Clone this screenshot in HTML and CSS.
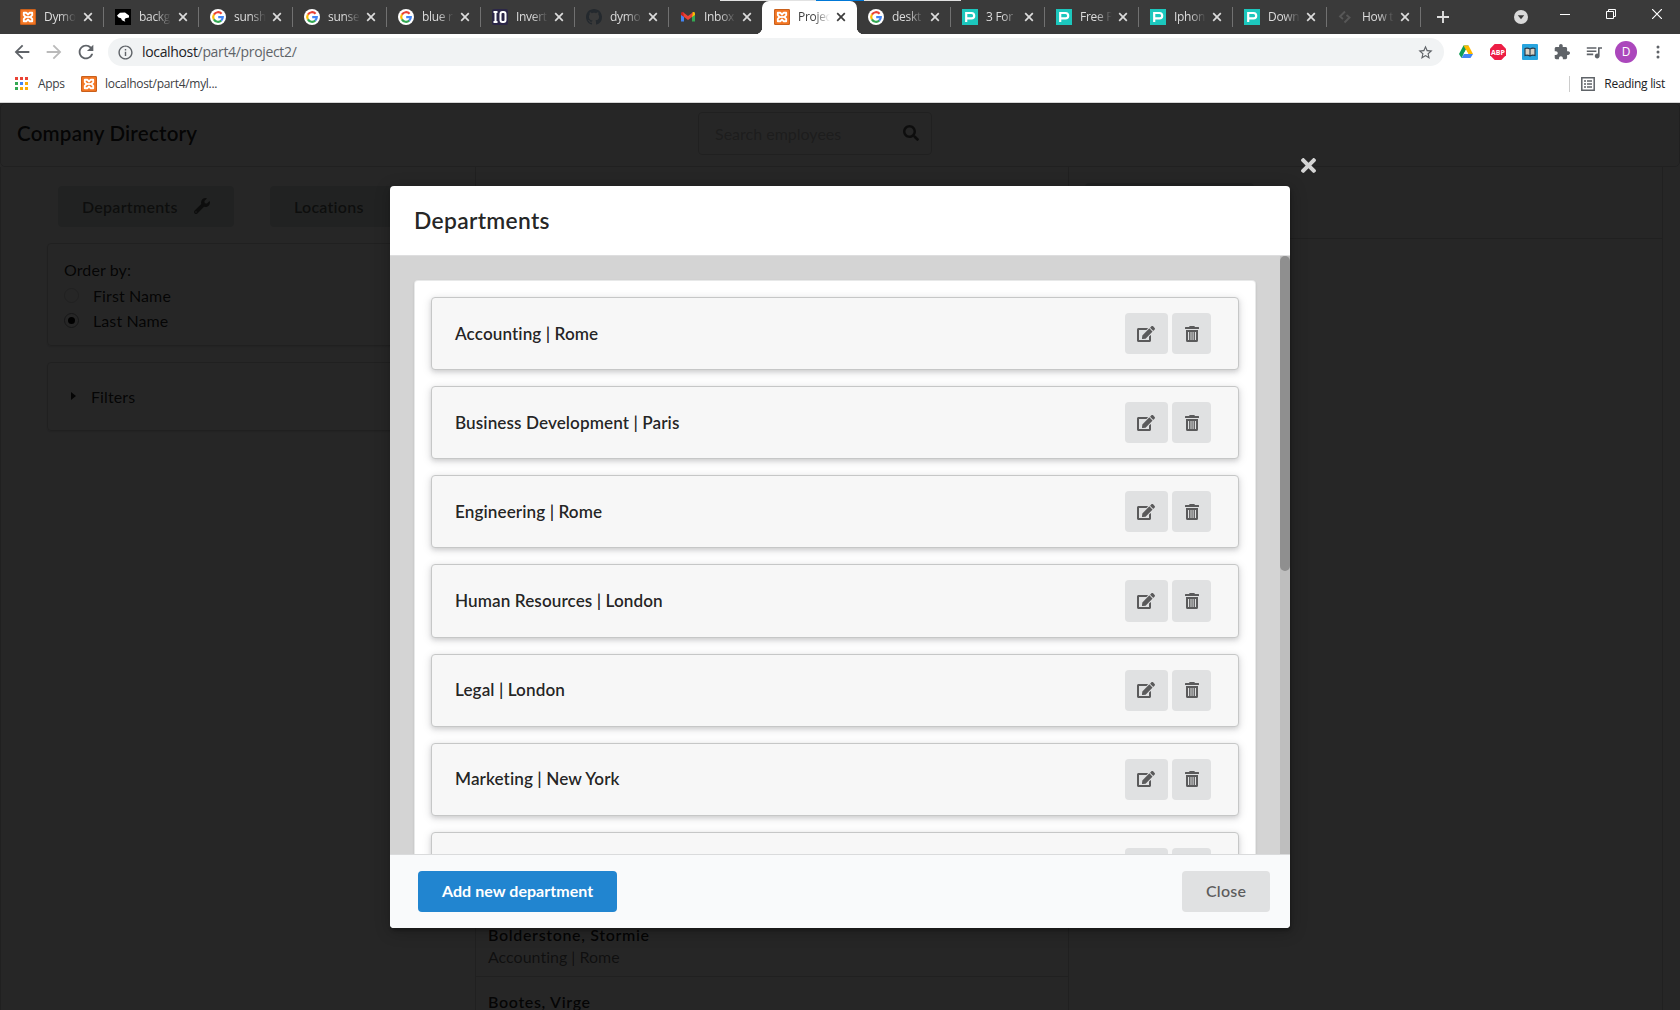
FILE: index.html
```html
<!DOCTYPE html>
<html lang="en">
<head>
<meta charset="utf-8">
<title>Project 2</title>
<link rel="stylesheet" href="styles.css">
</head>
<body>
<svg class="defs" aria-hidden="true">
  <symbol id="xampp" viewBox="0 0 16 16"><rect width="16" height="16" rx="1.2" fill="#c9601c"/><rect x="1" y="1" width="14" height="14" rx="1" fill="#f37623"/><path d="M3.800 3.700h2.400L8 5.500l1.800-1.800h2.400v2.500L10.400 8l1.800 1.800v2.500H9.800L8 10.500l-1.800 1.800H3.800V9.800L5.600 8 3.800 6.200z" fill="none" stroke="#fff" stroke-width="1.900" stroke-linejoin="round"/><path d="M6 8h4" stroke="#fff" stroke-width="1.800"/></symbol>
  <symbol id="bird" viewBox="0 0 16 16"><rect width="16" height="16" fill="#000"/><path d="M2 6.500 5 3.800 10 3.400l4 3v2l-3.500.8-1 1.500.8 2-3.300-1.500L6 9.200 3.500 8.500z" fill="#fff"/></symbol>
  <symbol id="google" viewBox="0 0 16 16"><circle cx="8" cy="8" r="8" fill="#fff"/><g fill="none" stroke-width="2.200"><path d="M11.600 4.800A4.800 4.800 0 0 0 3.900 5.600" stroke="#ea4335"/><path d="M3.900 5.500a4.900 4.900 0 0 0 0 5" stroke="#fbbc05"/><path d="M3.900 10.400a4.800 4.800 0 0 0 7.400 1.100" stroke="#34a853"/><path d="M8.200 8.100h4.600a4.800 4.800 0 0 1-1.600 3.500" stroke="#4285f4"/></g></symbol>
  <symbol id="io" viewBox="0 0 16 16"><rect width="16" height="16" rx="2" fill="#2b2647"/><path d="M1.500 3h4M1.500 13h4M3.500 3v10" stroke="#fff" stroke-width="2"/><rect x="8.500" y="3" width="5" height="10" rx="2" fill="none" stroke="#fff" stroke-width="2"/></symbol>
  <symbol id="github" viewBox="0 0 16 16"><path fill="#24292e" d="M8 0C3.580 0 0 3.580 0 8c0 3.540 2.290 6.530 5.470 7.590.4.070.55-.17.55-.38 0-.19-.01-.82-.01-1.490-2.010.37-2.530-.49-2.690-.94-.09-.23-.48-.94-.82-1.130-.28-.15-.68-.52-.01-.53.63-.01 1.080.58 1.230.82.72 1.210 1.870.87 2.330.66.07-.52.28-.87.51-1.070-1.780-.2-3.640-.89-3.640-3.950 0-.87.31-1.590.82-2.150-.08-.2-.36-1.020.08-2.120 0 0 .67-.21 2.200.82.64-.18 1.320-.27 2-.27s1.360.09 2 .27c1.530-1.040 2.200-.82 2.200-.82.44 1.100.16 1.920.08 2.120.51.56.82 1.270.82 2.150 0 3.070-1.870 3.750-3.650 3.950.29.25.54.73.54 1.480 0 1.070-.01 1.930-.01 2.200 0 .21.15.46.55.38A8.010 8.010 0 0 0 16 8c0-4.420-3.580-8-8-8z"/></symbol>
  <symbol id="gmail" viewBox="0 0 16 16"><path d="M1 5v7.500h3V7z" fill="#4285f4"/><path d="M15 5v7.500h-3V7z" fill="#34a853"/><path d="M1 6V4.300Q1 2.800 3 3l1 1v4z" fill="#c5221f"/><path d="M15 6V4.300Q15 2.800 13 3l-1 1v4z" fill="#fbbc04"/><path d="M3 3.200 8 7l5-3.800L12 8l-4 3-4-3z" fill="#ea4335"/></symbol>
  <symbol id="pex" viewBox="0 0 16 16"><rect width="16" height="16" fill="#1cc7bd"/><path d="M4.200 13V4h5.300a2.600 2.600 0 0 1 0 5.400H5" fill="none" stroke="#fff" stroke-width="2.200"/></symbol>
  <symbol id="snippet" viewBox="0 0 16 16"><path d="M7 2.500 2 7.500l3 2.500M6.500 13.500l5-5-3-2.500" fill="none" stroke="#575757" stroke-width="1.900"/></symbol>
  <symbol id="x" viewBox="0 0 10 10"><path d="M1.200 1.200l7.600 7.600M8.800 1.200l-7.600 7.600" stroke="currentColor" stroke-width="1.700"/></symbol>
  <symbol id="wrench" viewBox="0 0 512 512"><path fill="currentColor" d="M507.730 109.100c-2.240-9.030-13.540-12.090-20.120-5.510l-74.360 74.360-67.880-11.310-11.310-67.880 74.360-74.360c6.620-6.620 3.430-17.900-5.660-20.160-47.380-11.740-99.550.91-136.580 37.930-39.640 39.640-50.550 97.100-34.050 147.200L18.740 402.760c-24.990 24.990-24.990 65.510 0 90.500 24.990 24.990 65.510 24.990 90.500 0l213.210-213.210c50.120 16.710 107.470 5.680 147.370-34.220 37.070-37.070 49.700-89.320 37.910-136.730zM64 472c-13.250 0-24-10.750-24-24 0-13.260 10.750-24 24-24s24 10.740 24 24c0 13.250-10.750 24-24 24z"/></symbol>
  <symbol id="search" viewBox="0 0 512 512"><path fill="currentColor" d="M505 442.700L405.300 343c-4.500-4.500-10.600-7-17-7H372c27.600-35.300 44-79.700 44-128C416 93.100 322.900 0 208 0S0 93.100 0 208s93.100 208 208 208c48.300 0 92.700-16.400 128-44v16.300c0 6.400 2.500 12.500 7 17l99.700 99.700c9.400 9.400 24.600 9.400 33.900 0l28.300-28.300c9.400-9.400 9.400-24.600.1-34zM208 336c-70.700 0-128-57.200-128-128 0-70.700 57.200-128 128-128 70.700 0 128 57.200 128 128 0 70.700-57.200 128-128 128z"/></symbol>
  <symbol id="edit" viewBox="0 0 576 512"><path fill="currentColor" d="M402.600 83.200l90.200 90.200c3.800 3.800 3.800 10 0 13.800L274.400 405.600l-92.800 10.300c-12.400 1.400-22.900-9.100-21.500-21.500l10.300-92.800L388.800 83.200c3.800-3.800 10-3.800 13.800 0zm162-22.900l-48.800-48.800c-15.200-15.200-39.900-15.200-55.200 0l-35.400 35.400c-3.800 3.800-3.800 10 0 13.800l90.200 90.200c3.800 3.800 10 3.800 13.800 0l35.400-35.400c15.200-15.300 15.200-40 0-55.200zM384 346.200V448H64V128h229.800c3.200 0 6.200-1.300 8.500-3.500l40-40c7.600-7.600 2.200-20.500-8.500-20.500H48C21.500 64 0 85.500 0 112v352c0 26.500 21.500 48 48 48h352c26.500 0 48-21.500 48-48V306.200c0-10.700-12.900-16-20.500-8.500l-40 40c-2.200 2.300-3.500 5.300-3.500 8.500z"/></symbol>
  <symbol id="trash" viewBox="0 0 14 16"><path fill="currentColor" d="M0 1.500q0-.5.500-.5H4l.7-1h4.600l.7 1h3.500q.5 0 .5.500V3H0z"/><path fill="currentColor" fill-rule="evenodd" d="M1 4h12v10.500q0 1.500-1.500 1.500h-9Q1 16 1 14.500zM3 6v8h1.100V6zM5.500 6v8h1V6zM7.600 6v8h1V6zM9.900 6v8H11V6z"/></symbol>
  <symbol id="times" viewBox="0 80 352 352"><path fill="currentColor" d="M242.720 256l100.070-100.070c12.280-12.280 12.280-32.190 0-44.480l-22.240-22.240c-12.280-12.280-32.190-12.280-44.480 0L176 189.280 75.930 89.210c-12.280-12.280-32.190-12.280-44.480 0L9.210 111.450c-12.280 12.280-12.280 32.190 0 44.480L109.280 256 9.210 356.070c-12.280 12.280-12.280 32.190 0 44.480l22.240 22.240c12.280 12.280 32.200 12.280 44.480 0L176 322.720l100.070 100.070c12.280 12.280 32.200 12.280 44.480 0l22.240-22.240c12.280-12.280 12.280-32.190 0-44.480L242.720 256z"/></symbol>
  <symbol id="arrow" viewBox="0 0 24 24"><path fill="currentColor" d="M20 11H7.830l5.590-5.590L12 4l-8 8 8 8 1.410-1.410L7.830 13H20v-2z"/></symbol>
</svg>

<header class="browser">
  <div class="tabstrip">
    <div class="edge"><i></i></div>
    <div class="tab first"><svg class="fav"><use href="#xampp"/></svg><span>Dymo</span><svg class="x"><use href="#x"/></svg></div>
    <div class="tab second"><svg class="fav"><use href="#bird"/></svg><span>backg</span><svg class="x"><use href="#x"/></svg></div>
    <div class="tab"><svg class="fav"><use href="#google"/></svg><span>sunsh</span><svg class="x"><use href="#x"/></svg></div>
    <div class="tab"><svg class="fav"><use href="#google"/></svg><span>sunse</span><svg class="x"><use href="#x"/></svg></div>
    <div class="tab"><svg class="fav"><use href="#google"/></svg><span>blue r</span><svg class="x"><use href="#x"/></svg></div>
    <div class="tab"><svg class="fav"><use href="#io"/></svg><span>Invert</span><svg class="x"><use href="#x"/></svg></div>
    <div class="tab"><svg class="fav"><use href="#github"/></svg><span>dymo</span><svg class="x"><use href="#x"/></svg></div>
    <div class="tab before"><svg class="fav"><use href="#gmail"/></svg><span>Inbox</span><svg class="x"><use href="#x"/></svg></div>
    <div class="tab active"><svg class="fav"><use href="#xampp"/></svg><span>Projec</span><svg class="x"><use href="#x"/></svg></div>
    <div class="tab"><svg class="fav"><use href="#google"/></svg><span>deskt</span><svg class="x"><use href="#x"/></svg></div>
    <div class="tab"><svg class="fav"><use href="#pex"/></svg><span>3 For</span><svg class="x"><use href="#x"/></svg></div>
    <div class="tab"><svg class="fav"><use href="#pex"/></svg><span>Free P</span><svg class="x"><use href="#x"/></svg></div>
    <div class="tab"><svg class="fav"><use href="#pex"/></svg><span>Iphon</span><svg class="x"><use href="#x"/></svg></div>
    <div class="tab"><svg class="fav"><use href="#pex"/></svg><span>Down</span><svg class="x"><use href="#x"/></svg></div>
    <div class="tab"><svg class="fav"><use href="#snippet"/></svg><span>How t</span><svg class="x"><use href="#x"/></svg></div>
    <svg class="newtab" viewBox="0 0 12 12"><path d="M6 0v12M0 6h12" stroke="#dedede" stroke-width="1.900"/></svg>
    <div class="window">
      <svg class="drop" viewBox="0 0 14 14"><circle cx="7" cy="7" r="7" fill="#d9d9d9"/><path d="M3.800 5.300h6.400L7 9.300z" fill="#3a3a3a"/></svg>
      <svg class="min" viewBox="0 0 10 10"><path d="M0 5.500h10" stroke="#fff"/></svg>
      <svg class="max" viewBox="0 0 10 10"><path d="M.5 2.500h7v7h-7zM2.500 2.500v-2h7v7h-2" fill="none" stroke="#fff"/></svg>
      <svg class="shut" viewBox="0 0 10 10"><path d="M0 0l10 10M10 0L0 10" stroke="#fff" stroke-width="1.200"/></svg>
    </div>
  </div>
  <div class="toolbar">
    <svg class="nav"><use href="#arrow"/></svg>
    <svg class="nav forward"><use href="#arrow"/></svg>
    <svg class="nav" viewBox="0 0 24 24"><path fill="currentColor" d="M17.650 6.350C16.200 4.900 14.210 4 12 4c-4.420 0-7.990 3.580-7.990 8s3.570 8 7.990 8c3.730 0 6.840-2.550 7.730-6h-2.080c-.82 2.330-3.040 4-5.650 4-3.310 0-6-2.690-6-6s2.690-6 6-6c1.660 0 3.140.69 4.220 1.780L13 11h7V4l-2.350 2.350z"/></svg>
    <div class="address">
      <svg class="info" viewBox="0 0 24 24"><path fill="currentColor" d="M11 7h2v2h-2zm0 4h2v6h-2zm1-9C6.480 2 2 6.480 2 12s4.480 10 10 10 10-4.480 10-10S17.520 2 12 2zm0 18c-4.410 0-8-3.590-8-8s3.590-8 8-8 8 3.590 8 8-3.590 8-8 8z"/></svg>
      <span class="url"><b>localhost</b>/part4/project2/</span>
      <svg class="star" viewBox="0 0 24 24"><path fill="currentColor" d="M22 9.240l-7.190-.62L12 2 9.190 8.630 2 9.240l5.460 4.730L5.820 21 12 17.270 18.180 21l-1.630-7.030L22 9.240zM12 15.400l-3.760 2.270 1-4.280-3.320-2.880 4.380-.38L12 6.100l1.710 4.040 4.380.38-3.320 2.880 1 4.280L12 15.400z"/></svg>
    </div>
    <div class="extensions">
      <svg viewBox="0 0 16 16"><path d="M5.500 1.500h5L8 5.500 3.500 14 1 10z" fill="#0f9d58"/><path d="M5.500 1.500h5L15 10h-4.800z" fill="#ffba00"/><path d="M3.500 14 6 10h9l-2.500 4z" fill="#4285f4"/><path d="M8 5.800 5.600 10h4.800z" fill="#fff"/></svg>
      <svg viewBox="0 0 16 16"><path d="M4.700 0h6.600L16 4.700v6.600L11.300 16H4.700L0 11.300V4.700z" fill="#ed1e45"/><text class="abp" x="8" y="10.700" text-anchor="middle">ABP</text></svg>
      <svg viewBox="0 0 16 16"><rect width="16" height="16" rx="1" fill="#28a5df"/><path d="M8 5Q5.500 3.500 3 4.500v7q2.500-1 5 .5 2.500-1.500 5-.5v-7Q10.500 3.500 8 5v7" fill="#d8d0c2" stroke="#26394a" stroke-width="1.100"/></svg>
      <svg viewBox="1 1 22 22"><path fill="#5f6368" d="M20.500 11H19V7c0-1.100-.9-2-2-2h-4V3.500C13 2.120 11.880 1 10.500 1S8 2.120 8 3.500V5H4c-1.100 0-1.990.9-1.990 2v3.800H3.500c1.490 0 2.700 1.210 2.700 2.700s-1.210 2.700-2.700 2.700H2V20c0 1.100.9 2 2 2h3.800v-1.500c0-1.490 1.210-2.700 2.700-2.700 1.490 0 2.700 1.210 2.700 2.700V22H17c1.100 0 2-.9 2-2v-4h1.500c1.380 0 2.500-1.120 2.500-2.500S21.880 11 20.500 11z"/></svg>
      <svg viewBox="2 3 20 18"><path fill="#5f6368" d="M15 6H3v2h12V6zm0 4H3v2h12v-2zM3 16h8v-2H3v2zM17 6v8.180c-.31-.11-.65-.18-1-.18-1.660 0-3 1.340-3 3s1.340 3 3 3 3-1.340 3-3V8h3V6h-5z"/></svg>
      <span class="avatar">D</span>
      <svg class="kebab" viewBox="0 0 4 16"><g fill="#5f6368"><circle cx="2" cy="3" r="1.500"/><circle cx="2" cy="8" r="1.500"/><circle cx="2" cy="13" r="1.500"/></g></svg>
    </div>
  </div>
  <div class="bookmarks">
    <svg class="apps" viewBox="0 0 13 13"><path d="M0 0h3v3H0zM5 0h3v3H5zM10 0h3v3h-3z" fill="#ea4335"/><path d="M0 5h3v3H0zM0 10h3v3H0z" fill="#34a853"/><path d="M5 5h3v3H5z" fill="#4285f4"/><path d="M10 5h3v3h-3zM5 10h3v3H5zM10 10h3v3h-3z" fill="#fbab05"/></svg>
    <span class="apps-label">Apps</span>
    <svg class="fav"><use href="#xampp"/></svg>
    <span class="saved">localhost/part4/myl...</span>
    <div class="reading">
      <svg viewBox="0 0 14 14"><path d="M.8.800h12.400v12.400H.8z" fill="none" stroke="#5f6368" stroke-width="1.500"/><path d="M3 4h2M3 7h2M3 10h2M6 4h5M6 7h5M6 10h5" stroke="#5f6368" stroke-width="1.500"/></svg>
      <span>Reading list</span>
    </div>
  </div>
</header>

<div class="page">
  <div class="titlebar">
    <h3>Company Directory</h3>
    <div class="searchbox"><span>Search employees</span><svg><use href="#search"/></svg></div>
  </div>
  <div class="columns">
    <aside class="side">
      <div class="side-buttons">
        <div class="button tint">Departments<svg><use href="#wrench"/></svg></div>
        <div class="button tint">Locations<svg><use href="#wrench"/></svg></div>
      </div>
      <div class="box order">
        <p>Order by:</p>
        <label><i class="radio"></i>First Name</label>
        <label><i class="radio on"></i>Last Name</label>
      </div>
      <div class="box filters"><i class="caret"></i>Filters</div>
    </aside>
    <section class="people">
      <div class="person"><h4>Bolderstone, Stormie</h4><p>Accounting | Rome</p></div>
      <div class="person"><h4>Bootes, Virge</h4></div>
    </section>
    <section class="detail"><div class="detail-head"><i></i></div></section>
  </div>

  <div class="dimmer">
    <svg class="dismiss"><use href="#times"/></svg>
    <div class="modal">
      <h2>Departments</h2>
      <div class="content">
        <div class="scroll">
          <div class="list">
            <div class="card"><span>Accounting | Rome</span><button><svg class="edit"><use href="#edit"/></svg></button><button><svg class="trash"><use href="#trash"/></svg></button></div>
            <div class="card"><span>Business Development | Paris</span><button><svg class="edit"><use href="#edit"/></svg></button><button><svg class="trash"><use href="#trash"/></svg></button></div>
            <div class="card"><span>Engineering | Rome</span><button><svg class="edit"><use href="#edit"/></svg></button><button><svg class="trash"><use href="#trash"/></svg></button></div>
            <div class="card"><span>Human Resources | London</span><button><svg class="edit"><use href="#edit"/></svg></button><button><svg class="trash"><use href="#trash"/></svg></button></div>
            <div class="card"><span>Legal | London</span><button><svg class="edit"><use href="#edit"/></svg></button><button><svg class="trash"><use href="#trash"/></svg></button></div>
            <div class="card"><span>Marketing | New York</span><button><svg class="edit"><use href="#edit"/></svg></button><button><svg class="trash"><use href="#trash"/></svg></button></div>
            <div class="card"><span></span><button></button><button></button></div>
          </div>
        </div>
        <div class="track"><div class="thumb"></div></div>
      </div>
      <div class="actions"><div class="button primary">Add new department</div><div class="button close">Close</div></div>
    </div>
  </div>
</div>
</body>
</html>
```
FILE: styles.css
```css
* { box-sizing: border-box; }
body { margin: 0; width: 1680px; height: 1010px; overflow: hidden; display: flex; flex-direction: column; font-family: Lato, sans-serif; font-size: 16px; font-variant-ligatures: none; color: rgba(0,0,0,.87); background: #fff; }
h2, h3, h4, p { margin: 0; }
svg { display: block; flex: none; }
.defs { position: absolute; width: 0; height: 0; }

.browser { flex: none; height: 103px; background: #fff; border-bottom: 1px solid #d5d5d5; font-family: "Open Sans", sans-serif; font-size: 12px; }
.tabstrip { position: relative; height: 34px; background: #3a3a3a; display: flex; padding-left: 9px; }
.edge { position: absolute; left: 720px; top: 0; width: 241px; height: 1px; background: #e2e2e2; }
.edge i { display: block; margin-left: 96px; width: 48px; height: 1px; background: #0078d7; }
.tab { position: relative; flex: none; width: 94px; display: flex; align-items: center; padding: 0 0 0 11px; color: #dcdcdc; }
.tab.first, .tab.second { width: 95px; }
.tab::after { content: ""; position: absolute; right: 0; top: 7px; width: 1px; height: 20px; background: #717171; }
.tab.before::after, .tab.active::after { display: none; }
.tab .x { width: 10px; height: 10px; margin-left: 6px; }
.tab.first .x, .tab.second .x { margin-left: 7px; }
.tab span { width: 32px; margin-left: 8px; padding-bottom: 1px; overflow: hidden; white-space: nowrap; letter-spacing: -.3px; -webkit-mask-image: linear-gradient(90deg, #000 50%, transparent 100%); mask-image: linear-gradient(90deg, #000 50%, transparent 100%); }
.fav { width: 16px; height: 16px; }
.tab.active { width: 95px; margin-left: -1px; padding-left: 12px; margin-top: 1px; height: 33px; padding-bottom: 1px; background: #fff; border-radius: 7px 7px 0 0; color: #3c3c3c; }
.tab.active::before { content: ""; position: absolute; left: -7px; right: -7px; bottom: 0; height: 7px; background: radial-gradient(circle at 0 0, transparent 7px, #fff 7.500px) 0 0/7px 7px no-repeat, radial-gradient(circle at 100% 0, transparent 7px, #fff 7.500px) 100% 0/7px 7px no-repeat; }
.newtab { width: 12px; height: 12px; margin: 11px 0 0 16px; }
.window { margin-left: auto; display: flex; align-items: center; height: 28px; padding-right: 18px; }
.drop { width: 14px; height: 14px; margin: 6px 32px 0 0; }
.min, .max, .shut { width: 10px; height: 10px; }
.min { margin-right: 36px; }
.max { margin-right: 36px; }
.toolbar { height: 36px; display: flex; align-items: center; padding: 0 17px 0 11px; color: #5f6368; }
.nav { width: 22px; height: 22px; margin-right: 10px; }
.nav.forward { transform: scaleX(-1); color: #bababa; }
.address { width: 1336px; height: 28px; margin: 0 19px 0 1px; padding: 0 10px 0 9px; display: flex; align-items: center; background: #f1f3f4; border-radius: 14px; }
.address .info { width: 17px; height: 17px; }
.url { margin-left: 8px; font-size: 14px; line-height: 18px; padding-bottom: 1px; letter-spacing: -.34px; }
.url b { font-weight: 400; color: #202124; }
.star { width: 17px; height: 17px; margin-left: auto; }
.extensions { flex: 1; display: flex; align-items: center; gap: 16px; margin-left: -5px; }
.extensions svg { width: 16px; height: 16px; }
.abp { font: 700 7px "Open Sans", sans-serif; fill: #fff; }
.avatar { width: 22px; height: 22px; margin-left: -3px; border-radius: 50%; background: #ab47bc; color: #fff; text-align: center; line-height: 22px; font-size: 12px; }
.extensions .kebab { width: 4px; margin-left: 3px; }
.bookmarks { height: 32px; display: flex; align-items: center; padding: 0 15px 5px 15px; font-size: 12px; letter-spacing: -.3px; color: #3c4043; }
.apps { width: 13px; height: 13px; }
.apps-label { margin: 0 16px 0 10px; width: 27px; }
.saved { margin-left: 8px; }
.bookmarks span { padding-bottom: 1px; }
.reading { margin-left: auto; display: flex; align-items: center; height: 16px; border-left: 1px solid #ccc; padding-left: 11px; color: #202124; }
.reading svg { width: 14px; height: 14px; margin-right: 9px; }

.page { position: relative; flex: 1; display: flex; flex-direction: column; overflow: hidden; }
.titlebar { flex: none; height: 64px; border: 1px solid #d4d4d5; border-radius: 5px; display: flex; padding: 8px 0 0 16px; }
h3 { font-size: 20.570px; font-weight: 600; letter-spacing: .2px; line-height: 26px; width: 681px; padding-top: 8px; }
.searchbox { width: 234px; height: 43px; border: 1px solid #d4d4d5; border-radius: 4px; padding: 0 12px 2px 16px; display: flex; align-items: center; justify-content: space-between; color: #bfbfbf; }
.searchbox span { padding-top: 1px; }
.searchbox svg { width: 16px; height: 16px; color: #5b5b5b; }
.columns { flex: 1; display: grid; grid-template-columns: 474px 594px 594px; border-left: 1px solid #d4d4d5; }
.side { padding: 19px 0 0 46px; }
.side-buttons { display: flex; gap: 36px; padding-left: 11px; margin-bottom: 16px; width: 420px; }
.button { display: flex; align-items: center; height: 41px; padding: 0 24px 1px; border-radius: 4px; font-weight: 700; background: #e0e1e2; color: rgba(0,0,0,.6); white-space: nowrap; }
.button svg { width: 16px; height: 16px; margin-left: auto; }
.button.tint { background: #dce4e1; width: 176px; font-weight: 600; letter-spacing: .25px; }
.box { width: 410px; border: 1px solid #d4d4d5; border-radius: 4px; box-shadow: 0 1px 2px rgba(34,36,38,.15); padding: 0 16px; letter-spacing: .1px; }
.order { height: 103px; padding-top: 16px; line-height: 20px; }
.order label { display: flex; align-items: center; height: 25px; line-height: 25px; }
.order p { height: 23px; }
.radio { width: 15px; height: 15px; border: 1px solid #d4d4d5; border-radius: 50%; margin: 0 14px 1px 0; display: flex; align-items: center; justify-content: center; }
.radio.on { border-color: #96989a; }
.radio.on::after { content: ""; width: 7px; height: 7px; border-radius: 50%; background: #000; }
.filters { height: 69px; margin-top: 16px; display: flex; align-items: center; }
.caret { border: 4.500px solid transparent; border-left: 5px solid #222; border-right: 0; margin: 0 15px 2px 7px; }
.people { border-left: 1px solid #d4d4d5; border-right: 1px solid #d4d4d5; padding-top: 743px; }
.person { height: 67px; padding: 14px 12px 0; border-bottom: 1px solid #d4d4d5; }
.person h4 { font-size: 16px; font-weight: 600; line-height: 21px; letter-spacing: .65px; }
.person p { line-height: 23px; color: rgba(0,0,0,.6); }
.people .person { margin-right: -1px; }
.detail { border-right: 1px solid #d4d4d5; }
.detail-head { height: 72px; border-bottom: 1px solid #d4d4d5; padding: 16px; }
.detail-head i { display: block; width: 169px; height: 41px; border-radius: 4px; background: #dce4e1; }

.dimmer { position: absolute; inset: 0; background: rgba(0,0,0,.85); padding: 83px 390px 0; }
.dismiss { position: absolute; left: 1301px; top: 55px; width: 15px; height: 15px; color: #d4d4d4; }
.modal { height: 742px; display: flex; flex-direction: column; background: #fff; border-radius: 4px; overflow: hidden; box-shadow: 1px 3px 3px 0 rgba(0,0,0,.2), 1px 3px 15px 2px rgba(0,0,0,.2); }
h2 { flex: none; height: 70px; padding: 20px 24px; border-bottom: 1px solid #dededf; font-size: 22.857px; line-height: 29px; font-weight: 600; letter-spacing: .3px; }
.content { flex: 1; min-height: 0; display: flex; background: #d4d4d4; }
.scroll { flex: 1; overflow: hidden; padding: 24px; }
.list { display: flex; flex-direction: column; gap: 16px; background: #fff; border: 1px solid rgba(34,36,38,.1); border-radius: 4px; padding: 16px; box-shadow: 0 1px 2px rgba(34,36,38,.15); }
.card { display: flex; align-items: center; gap: 4px; flex: none; height: 73.140px; padding: 0 27px 0 23px; border: 1px solid #c6c7c7; border-radius: 4px; background: #f7f7f7; box-shadow: 0 2px 4px rgba(34,36,38,.12), 0 2px 10px rgba(34,36,38,.15); font-size: 17.140px; font-weight: 600; letter-spacing: .08px; }
.card span { margin-right: auto; padding-bottom: 1px; }
.card button { width: 43px; height: 41.140px; border: 0; border-radius: 4px; background: #e0e1e2; padding: 0 1px 0 0; display: flex; align-items: center; justify-content: center; color: #5a5a5b; }
.card button:last-child { width: 39px; padding: 0; }
.edit { width: 18px; height: 16px; }
.trash { width: 14px; height: 16px; }
.track { width: 10px; background: #bebebe; }
.thumb { height: 315px; border-radius: 5px; background: #8f8f8f; }
.actions { flex: none; height: 74px; display: flex; justify-content: space-between; padding: 16px 20px 16px 28px; border-top: 1px solid #dadbdc; background: #f9fafb; }
.actions .button { padding-bottom: 3px; }
.button.primary { background: #2185d0; color: #fff; width: 199px; letter-spacing: .05px; }
.button.close { width: 88px; font-weight: 600; letter-spacing: .2px; }
```
